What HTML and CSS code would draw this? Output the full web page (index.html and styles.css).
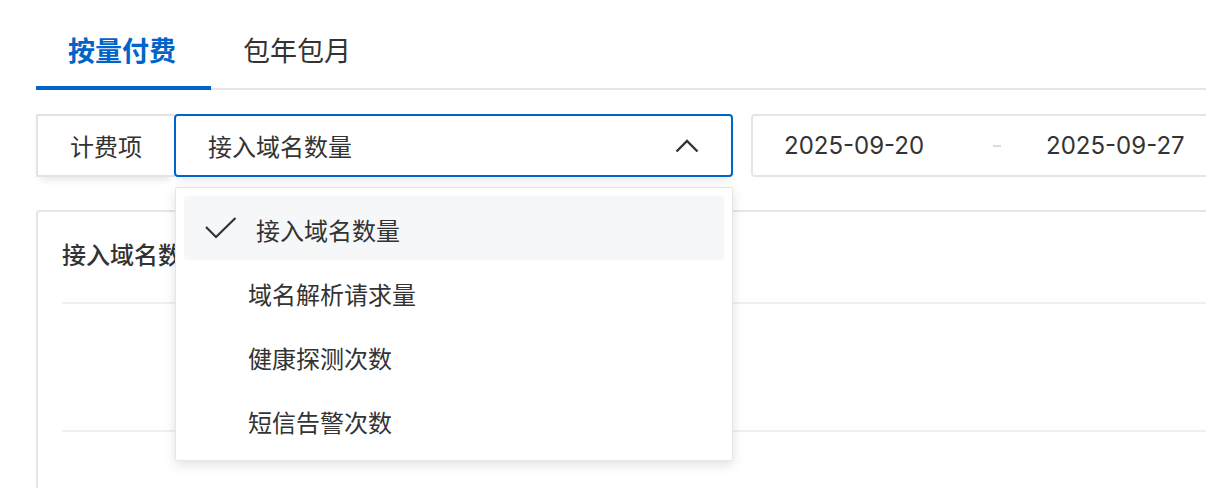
FILE: index.html
```html
<!DOCTYPE html>
<html lang="zh-CN">
<head>
<meta charset="utf-8">
<title>计费</title>
<link rel="stylesheet" href="styles.css">
</head>
<body>
<div class="page">
  <div class="tabs">
    <div class="tab active">按量付费</div>
    <div class="tab">包年包月</div>
  </div>

  <div class="filters">
    <div class="label-box">计费项</div>
    <div class="select-wrap">
      <div class="select">
        <span class="select-value">接入域名数量</span>
        <svg class="chevron" width="24" height="14" viewBox="0 0 24 14"><path d="M1.5 12.5 L12 2 L22.5 12.5" fill="none" stroke="#333" stroke-width="2.4" stroke-linejoin="miter"/></svg>
      </div>
      <div class="dropdown">
        <div class="option selected">
          <svg class="check" width="32" height="22" viewBox="0 0 32 22"><path d="M1 10 L11 20 L30.5 1" fill="none" stroke="#333" stroke-width="2.2"/></svg>
          <span>接入域名数量</span>
        </div>
        <div class="option">域名解析请求量</div>
        <div class="option">健康探测次数</div>
        <div class="option">短信告警次数</div>
      </div>
    </div>
    <div class="date-box">
      <span class="date">2025-09-20</span>
      <span class="sep"></span>
      <span class="date">2025-09-27</span>
    </div>
  </div>

  <div class="card">
    <div class="card-title">接入域名数量</div>
    <div class="chart"></div>
  </div>
</div>
</body>
</html>
```

FILE: styles.css
```css
html, body {
  margin: 0;
  padding: 0;
}
body {
  background: #fff;
  overflow: hidden;
  width: 1206px;
  height: 488px;
  font-family: "Noto Sans CJK SC", "Noto Sans", sans-serif;
  color: #333;
}
.page {
  padding-left: 36px;
  width: 1204px;
}
.tabs {
  display: flex;
  height: 88px;
  border-bottom: 2px solid #e5e5e5;
}
.tab {
  box-sizing: border-box;
  height: 90px;
  margin-bottom: -2px;
  padding: 12px 35px 0 32px;
  display: flex;
  align-items: center;
  font-size: 27px;
  line-height: 1;
  color: #333;
  border-bottom: 4px solid transparent;
}
.tab.active {
  color: #0064c8;
  font-weight: 700;
  border-bottom-color: #0064c8;
}
.filters {
  display: flex;
  margin-top: 24px;
  height: 63px;
}
.label-box {
  box-sizing: border-box;
  width: 138px;
  height: 63px;
  border: 2px solid #e4e4e8;
  border-right: none;
  display: flex;
  align-items: center;
  padding-left: 32px;
  font-size: 24px;
  line-height: 1;
  box-shadow: 0 6px 8px -4px rgba(0, 0, 0, 0.12);
}
.select-wrap {
  position: relative;
  width: 559px;
}
.select {
  box-sizing: border-box;
  height: 63px;
  border: 2px solid #0064c8;
  border-radius: 4px;
  display: flex;
  align-items: center;
  justify-content: space-between;
  padding: 0 32px 0 32px;
  font-size: 24px;
  line-height: 1;
  box-shadow: 0 6px 8px -4px rgba(0, 0, 0, 0.12);
}
.chevron {
  display: block;
  margin-top: 1px;
}
.dropdown {
  position: absolute;
  top: 73px;
  left: 1px;
  right: 0;
  box-sizing: border-box;
  background: #fff;
  border: 1px solid #e6e6e6;
  border-radius: 2px;
  padding: 8px;
  box-shadow: 0 4px 12px rgba(0, 0, 0, 0.12);
  z-index: 10;
}
.option {
  box-sizing: border-box;
  height: 64px;
  display: flex;
  align-items: center;
  padding: 4px 0 0 64px;
  font-size: 24px;
  line-height: 1;
  color: #333;
}
.option.selected {
  background: #f6f7f9;
  border-radius: 4px;
  padding-left: 21px;
}
.check {
  display: block;
  margin: -4px 19px 0 0;
}
.date-box {
  box-sizing: border-box;
  flex: 1;
  margin-left: 18px;
  height: 63px;
  border: 2px solid #e5e5e5;
  border-radius: 4px;
  display: flex;
  align-items: center;
  padding-left: 31px;
}
.date {
  font-family: "Inter", "Liberation Sans", sans-serif;
  font-size: 24px;
  line-height: 1;
  color: #333;
}
.sep {
  width: 8px;
  height: 2px;
  background: #dcdcdc;
  margin: 0 45px 0 69px;
}
.card {
  margin-top: 33px;
  box-sizing: border-box;
  border: 2px solid #e5e5e5;
  border-radius: 4px;
  height: 300px;
  padding-left: 24px;
}
.card-title {
  height: 92px;
  box-sizing: border-box;
  border-bottom: 2px solid #efefef;
  display: flex;
  align-items: center;
  padding: 0 0 6px 0;
  font-size: 24px;
  font-weight: 500;
  line-height: 1;
}
.chart {
  height: 126px;
  border-bottom: 2px solid #efefef;
}
```
